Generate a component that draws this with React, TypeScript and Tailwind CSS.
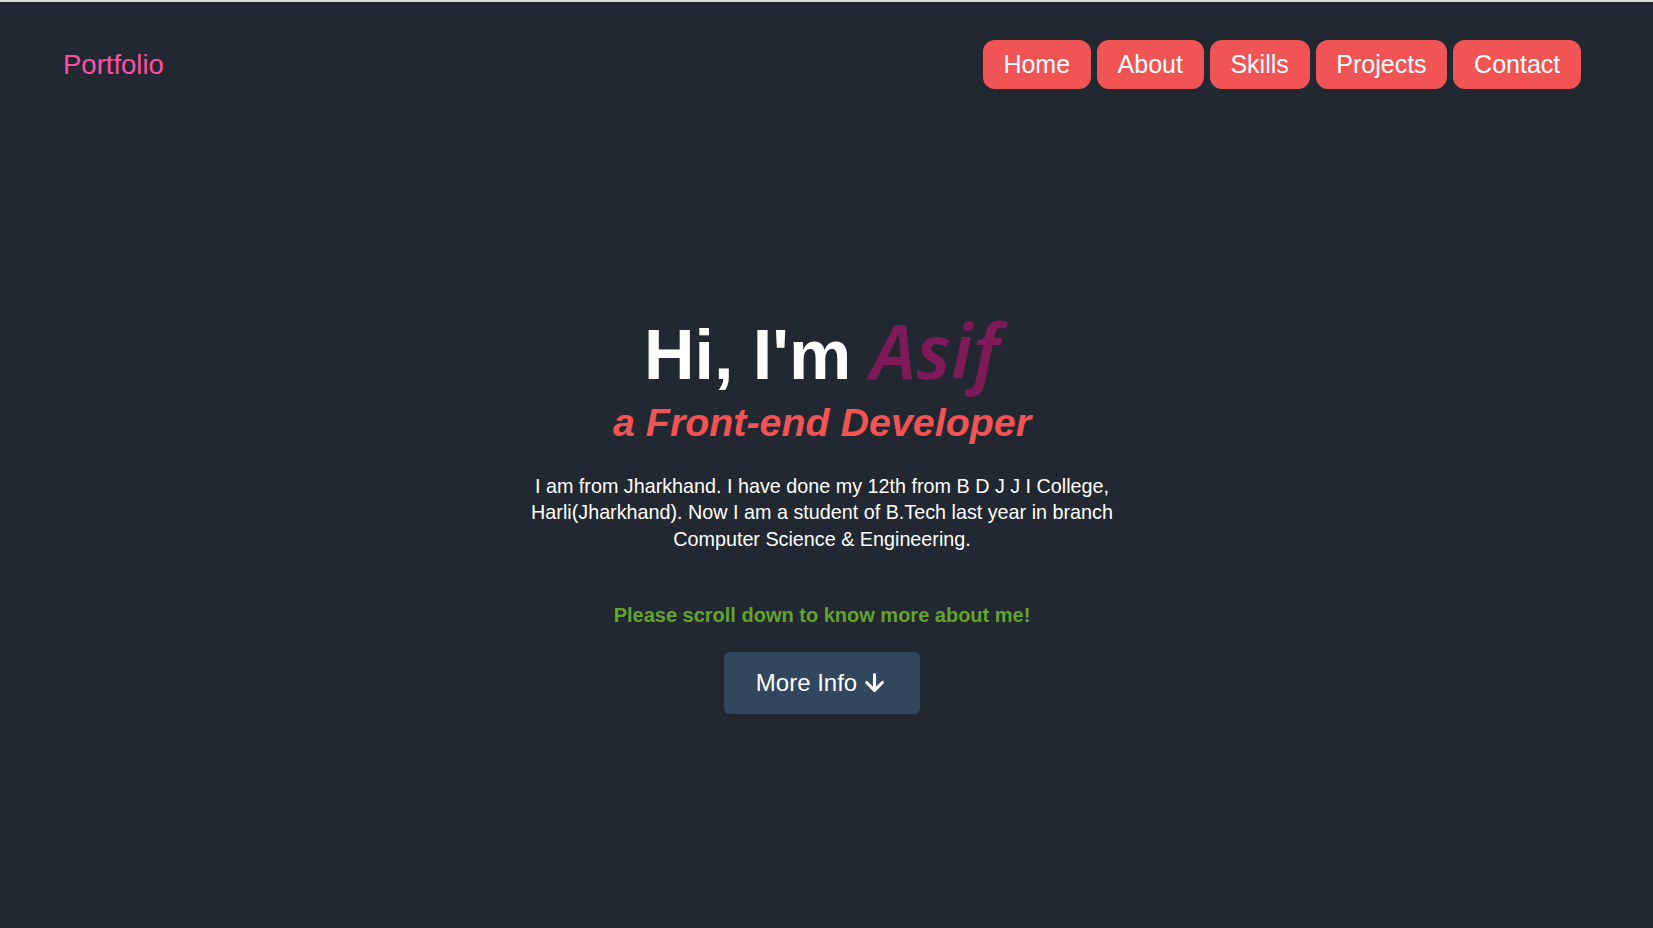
import { ArrowDown } from 'lucide-react'

const links = ['Home', 'About', 'Skills', 'Projects', 'Contact']

export default function App() {
  return (
    <div className="min-h-[928px] bg-[#222831] font-['Liberation_Sans',Arial,sans-serif]">
      <div className="h-0.5 bg-[#dcdcdc]"></div>

      {/* Navbar */}
      <nav className="flex items-center justify-between pl-[63px] pr-[72px] pt-[38px]">
        <a className="pt-[1px] text-[27.5px] leading-none text-[#ff4f9f]">Portfolio</a>
        <ul className="flex gap-[6px]">
          {links.map((l) => (
            <li key={l}>
              <a className="flex h-[49px] items-center rounded-xl bg-[#f05454] px-[20.75px] text-[25px] text-white">
                {l}
              </a>
            </li>
          ))}
        </ul>
      </nav>

      {/* Hero */}
      <section className="flex flex-col items-center pr-[9px] pt-[221px] text-center">
        <h1 className="text-[70px] font-bold leading-[80px] text-white">
          Hi, I'm{' '}
          <span className="font-['Noto_Sans',sans-serif] text-[75px] font-semibold italic tracking-[0.5px] text-[#7e1a57]">Asif</span>
        </h1>
        <h2 className="mt-[4px] text-[39.4px] font-bold italic leading-[46px] text-[#f05454]">
          a Front-end Developer
        </h2>
        <p className="mt-[28px] max-w-[600px] text-[19.75px] leading-[26.3px] text-white">
          I am from Jharkhand. I have done my 12th from B D J J I College, Harli(Jharkhand). Now I am a student of B.Tech last year in branch Computer Science &amp; Engineering.
        </p>
        <p className="mt-[48px] text-[20px] font-bold text-[#62a32e]">Please scroll down to know more about me!</p>
        <button className="mt-[22px] flex h-[62px] items-center gap-1 rounded-md bg-[#30475e] px-[32px] text-[24px] text-white">
          More Info <ArrowDown size={27} strokeWidth={2.75} />
        </button>
      </section>
    </div>
  )
}
